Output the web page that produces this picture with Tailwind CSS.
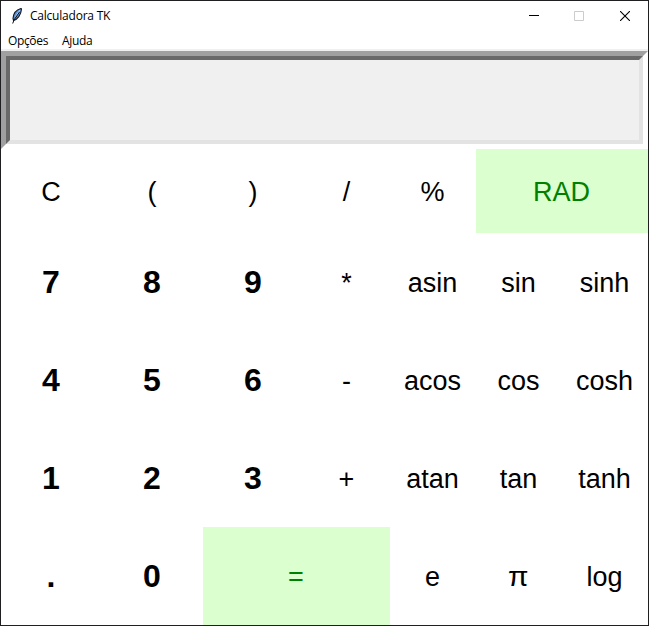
<!DOCTYPE html>
<html lang="pt">
<head>
<meta charset="utf-8">
<title>Calculadora TK</title>
<script src="https://cdn.jsdelivr.net/npm/@tailwindcss/browser@4"></script>
</head>
<body class="bg-white">
<div class="flex h-[626px] w-[649px] flex-col overflow-hidden border border-[#1f1f21] bg-white text-black">
  <header class="flex h-[30px] shrink-0 items-center font-['Open_Sans',sans-serif] text-[12px]">
    <svg class="ml-[8px] h-4 w-4" viewBox="0 0 16 16" fill="none">
      <path d="M12 .5C8 1.500 4.500 5 4 10.500l.5 2C8.500 11.500 12 7 12.500 1Z" fill="#5b94dc" stroke="#15171c" stroke-width="1.100"/>
      <path d="M11 2 6.500 8.500" stroke="#a9cdf5" stroke-width="1"/>
      <path d="M10.500 4 5 12 3.700 15.500" stroke="#101010" stroke-width="1"/>
    </svg>
    <span class="ml-[5px] tracking-[-0.22px]">Calculadora TK</span>
    <div class="ml-auto flex">
      <span class="flex w-[46px] justify-center"><svg class="h-[10px] w-[10px]" viewBox="0 0 10 10"><path d="M0 4.500h10" stroke="#000"/></svg></span>
      <span class="flex w-[44px] justify-center"><svg class="h-[10px] w-[10px]" viewBox="0 0 10 10"><path d="M.5.5h9v9h-9z" fill="none" stroke="#ccc"/></svg></span>
      <span class="flex w-[47px] justify-center pl-px"><svg class="h-[10px] w-[10px]" viewBox="0 0 10 10"><path d="M0 0l10 10M10 0L0 10" stroke="#000" stroke-width="1.100"/></svg></span>
    </div>
  </header>
  <nav class="flex h-[20px] shrink-0 items-center gap-[14px] border-b-2 border-[#f0f0f0] pt-[2px] pl-[7px] font-['Open_Sans',sans-serif] text-[12px] tracking-[-0.35px]">
    <span>Opções</span><span>Ajuda</span>
  </nav>
  <div class="h-[98px] shrink-0 border-[5px] border-t-[#a0a0a0] border-r-white border-b-white border-l-[#a0a0a0]">
    <div class="h-full border-4 border-t-[#696969] border-r-[#e3e3e3] border-b-[#e3e3e3] border-l-[#696969] bg-[#f0f0f0]"></div>
  </div>
  <main class="grid shrink-0 grid-cols-[101px_101px_101px_86px_86px_86px_86px] grid-rows-[84px_98px_98px_98px_98px] font-['Liberation_Sans',Arial,sans-serif] text-[27px] *:flex *:items-center *:justify-center *:pt-[2px] *:pr-px">
    <button>C</button><button>(</button><button>)</button><button>/</button><button>%</button><button class="col-span-2 bg-[#dbffce] text-[#008000]">RAD</button>
    <button class="pt-0! text-[32px] font-bold">7</button><button class="pt-0! text-[32px] font-bold">8</button><button class="pt-0! text-[32px] font-bold">9</button><button>*</button><button>asin</button><button>sin</button><button>sinh</button>
    <button class="pt-0! text-[32px] font-bold">4</button><button class="pt-0! text-[32px] font-bold">5</button><button class="pt-0! text-[32px] font-bold">6</button><button>-</button><button>acos</button><button>cos</button><button>cosh</button>
    <button class="pt-0! text-[32px] font-bold">1</button><button class="pt-0! text-[32px] font-bold">2</button><button class="pt-0! text-[32px] font-bold">3</button><button>+</button><button>atan</button><button>tan</button><button>tanh</button>
    <button class="pt-0! text-[32px] font-bold">.</button><button class="pt-0! text-[32px] font-bold">0</button><button class="col-span-2 bg-[#dbffce] text-[#008000]">=</button><button>e</button><button><span class="scale-x-110">π</span></button><button>log</button>
  </main>
</div>
</body>
</html>
